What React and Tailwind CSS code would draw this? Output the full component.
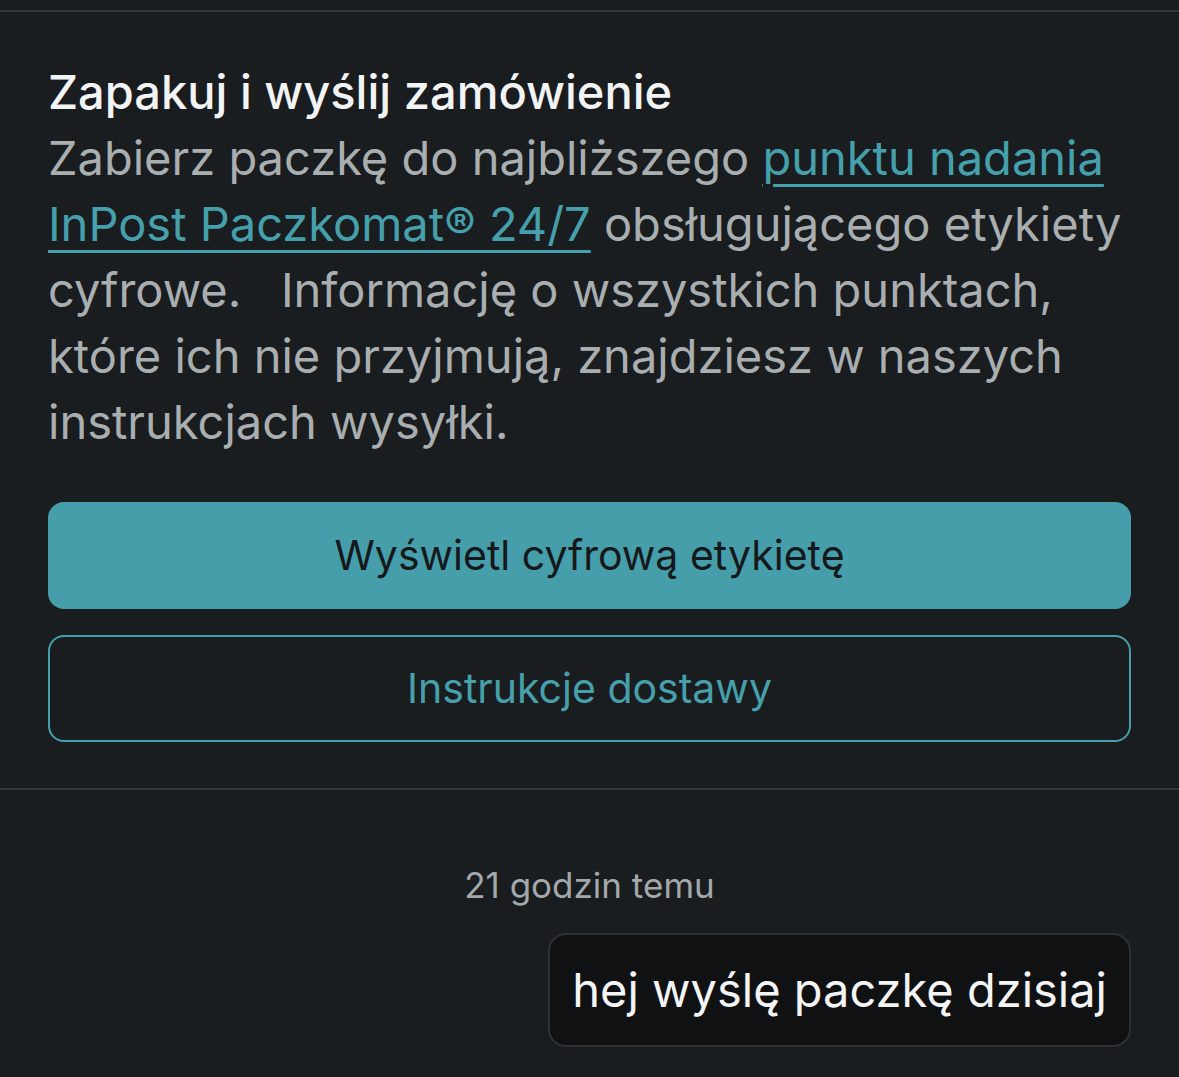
export default function App() {
  return (
    <div
      className="w-[1179px] h-[1077px] overflow-hidden bg-[#1a1d1f] text-white"
      style={{ fontFamily: 'Inter, "Noto Sans", sans-serif' }}
    >
      <div className="pt-[10px]">
        <div className="h-[2px] bg-[#35393b]" />
      </div>

      <section className="px-[48px] pt-[47px] pb-[46px]">
        <h2 className="text-[47px] leading-[66px] font-medium text-[#f2f3f4]">
          Zapakuj i wyślij zamówienie
        </h2>
        <p className="text-[47px] leading-[66px] text-[#a9aeb0]">
          Zabierz paczkę do najbliższego{' '}
          <a href="#" className="text-[#46a0ab] underline underline-offset-[9px] decoration-[3px]">
            punktu nadania InPost Paczkomat® 24/7
          </a>{' '}
          obsługującego etykiety cyfrowe.&nbsp;&nbsp; Informację o wszystkich punktach, które ich nie przyjmują, znajdziesz w naszych instrukcjach wysyłki.
        </p>

        <div className="mt-[47px] flex flex-col gap-[26px]">
          <button className="h-[107px] w-full rounded-[16px] bg-[#459eaa] text-[41px] text-[#16191b]">
            Wyświetl cyfrową etykietę
          </button>
          <button className="h-[107px] w-full rounded-[16px] border-2 border-[#46a0ab] text-[41px] text-[#46a0ab]">
            Instrukcje dostawy
          </button>
        </div>
      </section>

      <div className="h-[2px] bg-[#35393b]" />

      <div className="flex flex-col items-center pt-[73px]">
        <span className="text-[35px] leading-[44px] text-[#a3a8aa]">21 godzin temu</span>
      </div>
      <div className="flex justify-end px-[48px] mt-[26px]">
        <div className="rounded-[18px] border-2 border-[#2e3133] bg-[#0f1113] px-[22px] py-[25px]">
          <span className="block text-[47px] leading-[60px] text-[#f4f4f5]">hej wyślę paczkę dzisiaj</span>
        </div>
      </div>
    </div>
  )
}
